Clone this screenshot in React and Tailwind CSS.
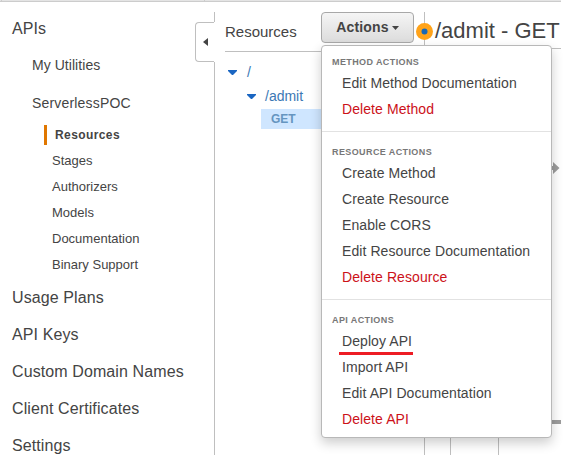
const stageLinks = ["Stages", "Authorizers", "Models", "Documentation", "Binary Support"];
const mainLinks = ["Usage Plans", "API Keys", "Custom Domain Names", "Client Certificates", "Settings"];

const groups = [
  { title: "METHOD ACTIONS", items: ["Edit Method Documentation", "Delete Method"] },
  {
    title: "RESOURCE ACTIONS",
    items: ["Create Method", "Create Resource", "Enable CORS", "Edit Resource Documentation", "Delete Resource"],
  },
  { title: "API ACTIONS", items: ["Deploy API", "Import API", "Edit API Documentation", "Delete API"] },
];

function Caret() {
  return (
    <svg className="h-[5px] w-[9px] shrink-0" viewBox="0 0 9 5">
      <path d="M0 0h9v1L5 5H4L0 1z" fill="#1a66c2" />
    </svg>
  );
}

function Sidebar() {
  return (
    <nav className="w-[195px] shrink-0 whitespace-nowrap pl-3 pt-[5px]">
      <div className="h-[37px] text-[16px] leading-[37px] tracking-[0.1px]">APIs</div>
      <div className="h-[38px] pl-5 text-[14px] leading-[37px] tracking-[0.05px]">My Utilities</div>
      <div className="h-[37px] pl-5 text-[14px] leading-[37px] tracking-[0.18px]">ServerlessPOC</div>
      <div className="ml-8 mt-[3px] h-5 border-l-[3px] border-[#e07700] pl-2 text-[12px] font-bold leading-5 tracking-[0.4px]">
        Resources
      </div>
      <ul className="pl-10 pt-[3px] text-[13px] leading-[26px]">
        {stageLinks.map((l) => (
          <li key={l}>{l}</li>
        ))}
      </ul>
      <ul className="pt-[1px] text-[16px] leading-[37px] tracking-[0.1px]">
        {mainLinks.map((l) => (
          <li key={l}>{l}</li>
        ))}
      </ul>
    </nav>
  );
}

function CollapseHandle() {
  return (
    <div className="flex w-5 shrink-0 flex-col pt-[7px]">
      <div className="h-[10px] border-r border-[#bfbfbf]" />
      <div className="flex h-10 w-[19px] items-center justify-center rounded-l-[4px] border border-r-0 border-[#bfbfbf]">
        <svg className="h-2 w-[5px]" viewBox="0 0 5 8">
          <path d="M5 0v8L0 4z" fill="#444" />
        </svg>
      </div>
      <div className="flex-1 border-r border-[#bfbfbf]" />
    </div>
  );
}

function ActionsMenu() {
  return (
    <div className="absolute left-[321px] top-[45px] h-[393px] w-[231px] whitespace-nowrap rounded-[4px] border border-[#b8b8b8] bg-white pt-[6px] shadow-[0_5px_12px_rgba(0,0,0,0.2)]">
      {groups.map((g, i) => (
        <section key={g.title} className={i ? "mt-[9px] border-t border-[#e2e2e2] pt-[10px]" : ""}>
          <h3 className="h-[18px] pl-[10px] text-[9px] font-bold leading-5 tracking-[0.4px] text-[#777]">{g.title}</h3>
          <ul className="pl-5 text-[14px] leading-[26px] tracking-[0.08px] text-[#444]">
            {g.items.map((t) => (
              <li key={t} className={t.startsWith("Delete") ? "h-[26px] text-[#cc1119]" : "h-[26px]"}>
                <span className="relative">
                  {t}
                  {t === "Deploy API" && (
                    <span className="absolute -left-[3px] top-[19px] h-[3px] w-[74px] bg-[#ed1c24]" />
                  )}
                </span>
              </li>
            ))}
          </ul>
        </section>
      ))}
    </div>
  );
}

export default function App() {
  return (
    <div className="relative h-[461px] w-[565px] overflow-hidden bg-white font-['Liberation_Sans',Arial,sans-serif] text-[#444]">
      <div className="flex h-[2px] w-[561px] border-b border-[#ccc] bg-[#e4e4e4]">
        <div className="ml-[1px] w-[204px] border-x border-[#ccc]" />
      </div>
      <div className="flex h-[453px] w-[561px] pt-[3px]">
        <Sidebar />
        <CollapseHandle />
        <main className="flex min-w-0 flex-1 pt-[7px]">
          <div className="ml-[10px] w-[199px] shrink-0">
            <div className="flex h-[40px] justify-between border-b border-[#bfbfbf]">
              <h2 className="text-[15px] leading-[39px]">Resources</h2>
              <button className="mr-[10px] flex h-[31px] w-[93px] items-center justify-center gap-[3px] rounded-[4px] border border-[#a8a8a8] bg-linear-to-b from-[#f5f5f5] to-[#dcdcdc] text-[14px] font-bold tracking-[0.15px]">
                Actions
                <svg className="h-1 w-[7px]" viewBox="0 0 7 4">
                  <path d="M0 0h7L3.500 4z" fill="#444" />
                </svg>
              </button>
            </div>
            <div className="mt-[8px] flex h-6 items-center gap-[10px] pl-[3px] text-[14px] text-[#3c78b4]">
              <Caret />/
            </div>
            <div className="flex h-[25px] items-center gap-[9px] pl-[22px] text-[14px] text-[#3c78b4]">
              <Caret />/admit
            </div>
            <div className="ml-9 h-5 bg-[#cfe6ff] pl-[10px] text-[12px] font-bold leading-5 text-[#6595c0]">GET</div>
          </div>
          <div className="flex min-w-0 flex-1 flex-col">
            <div className="flex h-[37px] items-center gap-[1px] whitespace-nowrap border-b border-[#bfbfbf]">
              <svg className="-ml-2 h-[37px] w-[18px] shrink-0" viewBox="0 0 18 37">
                <path d="M8.500 0v37" stroke="#bfbfbf" />
                <circle cx="8.500" cy="19.500" r="8.500" fill="#ffa31a" />
                <circle cx="8.500" cy="19.500" r="3" fill="#1668b8" />
              </svg>
              <h1 className="text-[22px] leading-[37px]">/admit - GET</h1>
            </div>
            <div className="flex flex-1">
              <div className="w-[27px] shrink-0 border-x border-[#bfbfbf]" />
              <div className="w-12 shrink-0 border-r border-[#bfbfbf]" />
              <svg className="h-[406px] w-[62px] shrink-0" viewBox="0 0 62 406">
                <path d="M40 117h14v-4l6.500 6-6.500 6v-4H40z" fill="#9c9c9c" />
                <path d="M40 371h22v4H40z" fill="#9c9c9c" />
              </svg>
            </div>
          </div>
        </main>
      </div>
      <ActionsMenu />
    </div>
  );
}
